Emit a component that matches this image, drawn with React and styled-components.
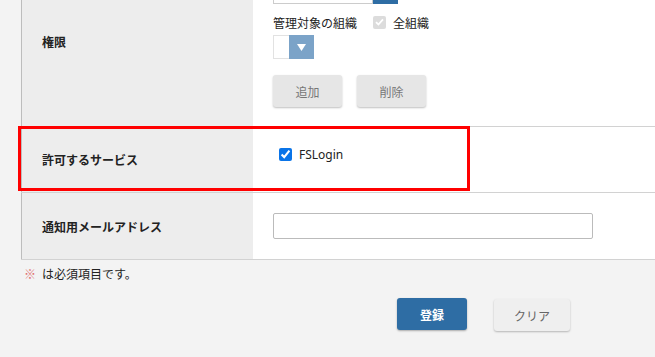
import styled, { createGlobalStyle } from "styled-components";

const GlobalStyle = createGlobalStyle`
  html, body {
    margin: 0;
    padding: 0;
    background: #f3f3f3;
    overflow: hidden;
    font-family: "Noto Sans CJK JP", "Noto Sans", sans-serif;
    color: #222;
  }
`;

function App() {
  return (
    <>
      <GlobalStyle />
      <Page>
        <Table>
          <tbody>
            <Row>
              <Th>権限</Th>
              <Td>
                <Stack>
                  <InputGroup>
                    <GroupField />
                    <GroupButton />
                  </InputGroup>
                  <Inline>
                    <span>管理対象の組織</span>
                    <DisabledCheck>
                      <svg width="9" height="8" viewBox="0 0 9 8">
                        <path d="M1 4.2 L3.4 6.5 L8 1.4" fill="none" stroke="#fff" strokeWidth="1.8" />
                      </svg>
                    </DisabledCheck>
                    <span>全組織</span>
                  </Inline>
                  <Select>
                    <SelectValue />
                    <SelectArrow>
                      <svg width="9" height="7" viewBox="0 0 9 7">
                        <path d="M0 0 H9 L4.5 7 Z" fill="#fff" />
                      </svg>
                    </SelectArrow>
                  </Select>
                  <Buttons>
                    <GrayButton>追加</GrayButton>
                    <GrayButton>削除</GrayButton>
                  </Buttons>
                </Stack>
              </Td>
            </Row>
            <Row>
              <Th $h={65}>許可するサービス</Th>
              <Td $top>
                <CheckLabel>
                  <Check type="checkbox" defaultChecked />
                  FSLogin
                </CheckLabel>
              </Td>
            </Row>
            <Row>
              <Th $h={66}>通知用メールアドレス</Th>
              <Td>
                <TextInput type="text" />
              </Td>
            </Row>
          </tbody>
        </Table>
        <Note>
          <Mark>※</Mark>は必須項目です。
        </Note>
        <Actions>
          <PrimaryButton>登録</PrimaryButton>
          <ClearButton>クリア</ClearButton>
        </Actions>
        <Highlight />
      </Page>
    </>
  );
}

let Page = styled.div`
  position: relative;
  display: flow-root;
  width: 700px;
  height: 357px;
  padding-left: 21px;
`;

let Table = styled.table`
  width: 680px;
  margin-top: -43px;
  border-collapse: collapse;
  border-left: 1px solid #bdbdbd;
`;

let Row = styled.tr`
  border-bottom: 1px solid #d2d2d2;
`;

let Th = styled.th`
  width: 191px;
  height: ${({ $h }) => $h || 65}px;
  padding: 0 20px;
  background: #ededed;
  text-align: left;
  vertical-align: middle;
  font-size: 12px;
  font-weight: bold;
  color: #222;
`;

let Td = styled.td`
  background: #fff;
  padding: ${({ $top }) => ($top ? "18px 20px 0" : "0 20px")};
  vertical-align: ${({ $top }) => ($top ? "top" : "middle")};
  font-size: 12px;
`;

let Stack = styled.div`
  display: flex;
  flex-direction: column;
  align-items: flex-start;
  padding: 21px 0 19px;
`;

let InputGroup = styled.div`
  display: flex;
  height: 26px;
`;

let GroupField = styled.div`
  width: 98px;
  border: 1px solid #ccc;
  background: #fff;
`;

let GroupButton = styled.div`
  width: 25px;
  background: #2e6da4;
`;

let Inline = styled.div`
  display: flex;
  align-items: center;
  height: 18px;
  margin-top: 9px;
  font-size: 12px;
  color: #222;

  span:last-child {
    margin-left: 7px;
  }
`;

let DisabledCheck = styled.span`
  display: inline-flex;
  align-items: center;
  justify-content: center;
  width: 13px;
  height: 13px;
  margin-left: 16px;
  border-radius: 2px;
  background: #dcdcdc;
`;

let Select = styled.div`
  display: flex;
  height: 24px;
  margin-top: 4px;
`;

let SelectValue = styled.div`
  width: 15px;
  border: 1px solid #e2e2e2;
  border-right: none;
  background: #fff;
`;

let SelectArrow = styled.div`
  display: flex;
  align-items: center;
  justify-content: center;
  width: 25px;
  background: #7ba3c8;
`;

let Buttons = styled.div`
  display: flex;
  gap: 15px;
  margin-top: 16px;
`;

let GrayButton = styled.button`
  width: 69px;
  height: 32px;
  border: none;
  border-radius: 3px;
  background: #e6e6e6;
  box-shadow: 0 1px 2px rgba(0, 0, 0, 0.25);
  color: #777;
  font-family: inherit;
  font-size: 12px;
`;

let CheckLabel = styled.label`
  display: flex;
  align-items: center;
  height: 18px;
  font-family: "Noto Sans", "Noto Sans CJK JP", sans-serif;
  font-size: 12px;
  color: #222;
`;

let Check = styled.input`
  width: 13px;
  height: 13px;
  margin: 0 7px 0 6px;
  accent-color: #0a74e8;
`;

let TextInput = styled.input`
  display: block;
  box-sizing: border-box;
  width: 320px;
  height: 26px;
  border: 1px solid #bbb;
  border-radius: 2px;
  background: #fff;
`;

let Note = styled.div`
  display: flex;
  align-items: center;
  height: 26px;
  font-size: 12px;
  color: #222;
`;

let Mark = styled.span`
  margin: 0 6px 0 3px;
  color: #e07070;
`;

let Actions = styled.div`
  display: flex;
  align-items: flex-start;
  gap: 27px;
  margin: 12px 0 0 376px;
`;

let PrimaryButton = styled.button`
  width: 70px;
  height: 32px;
  border: none;
  border-radius: 3px;
  background: #2e6da4;
  box-shadow: 0 1px 2px rgba(0, 0, 0, 0.3);
  color: #fff;
  font-family: inherit;
  font-size: 12px;
  font-weight: bold;
`;

let ClearButton = styled.button`
  width: 76px;
  height: 32px;
  margin-top: 1px;
  border: none;
  border-radius: 3px;
  background: #efefef;
  box-shadow: 0 1px 2px rgba(0, 0, 0, 0.25);
  color: #666;
  font-family: inherit;
  font-size: 12px;
`;

let Highlight = styled.div`
  position: absolute;
  left: 18px;
  top: 126px;
  width: 446px;
  height: 59px;
  border: 3px solid #ff0000;
  pointer-events: none;
`;

export default App;
